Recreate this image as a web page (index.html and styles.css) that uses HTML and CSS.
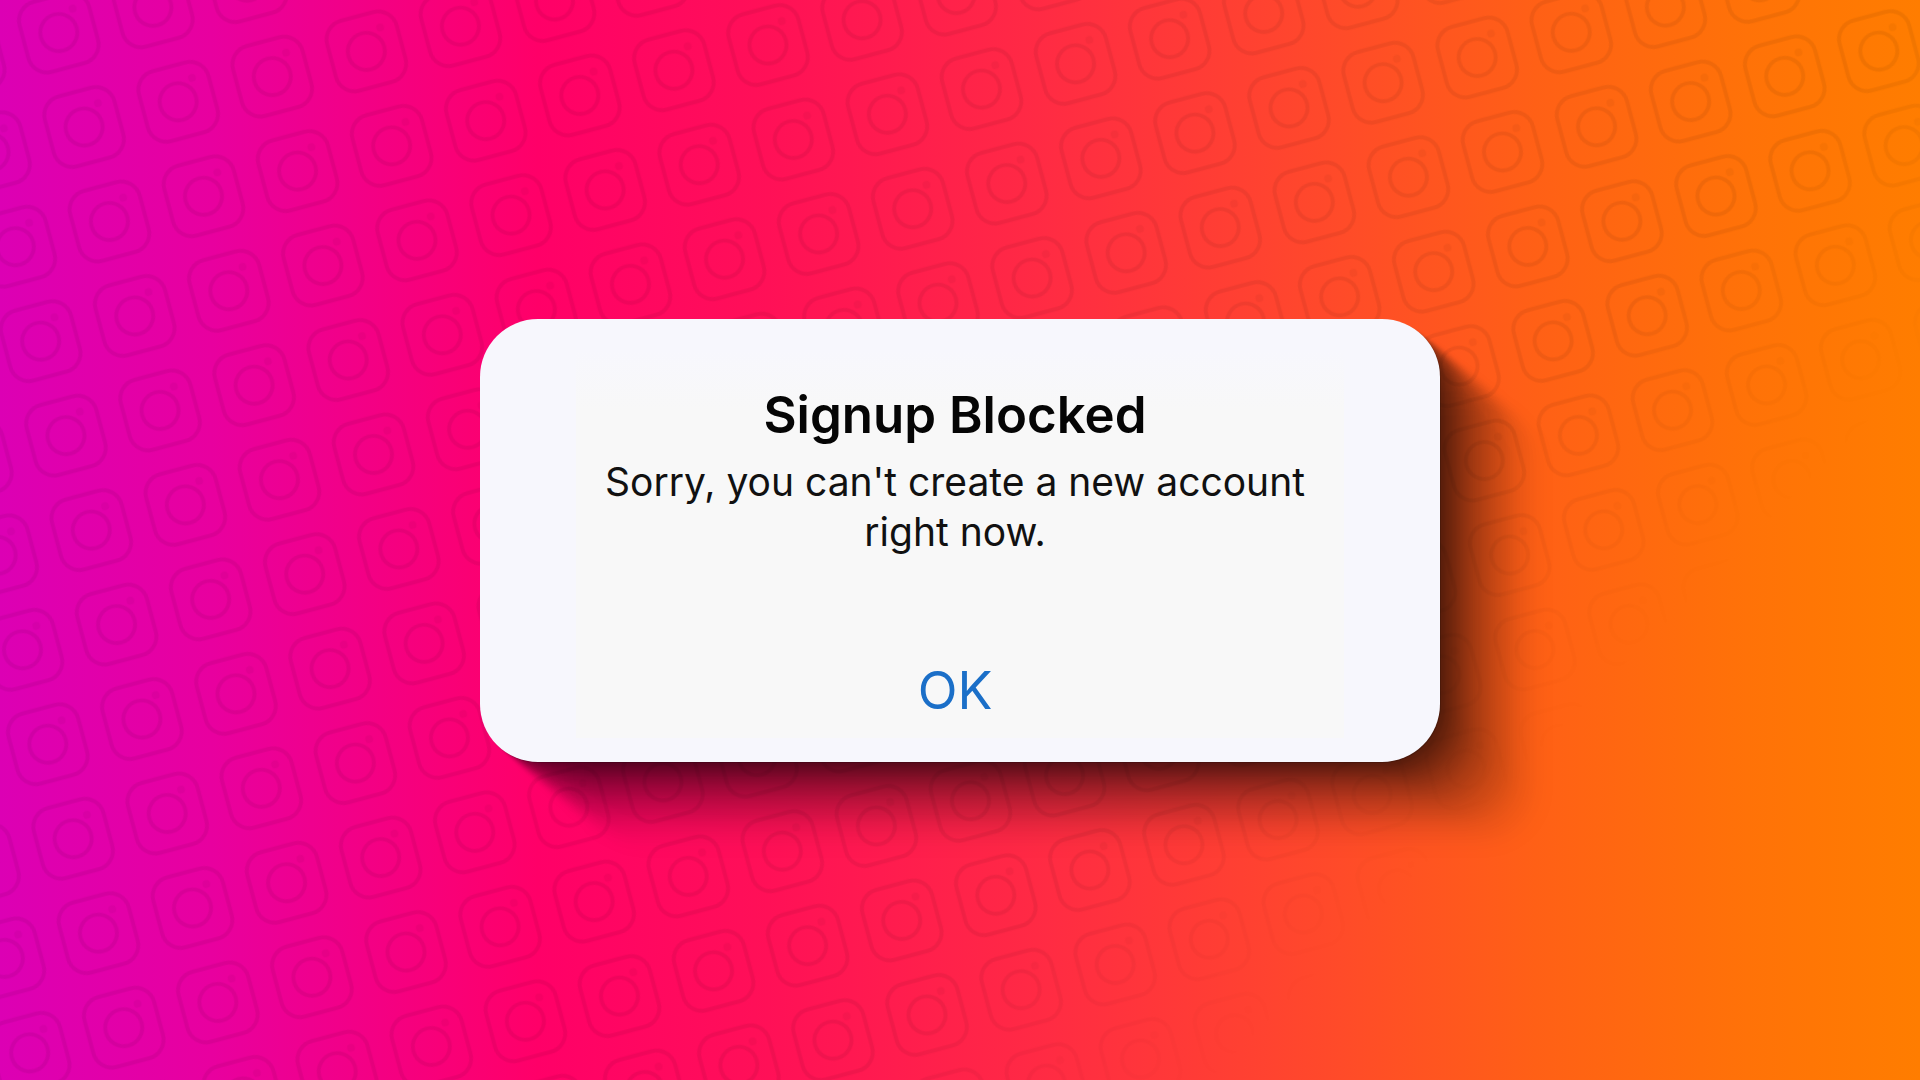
FILE: index.html
```
<!DOCTYPE html>
<html lang="en">
<head>
    <meta charset="UTF-8">
    <title>Signup Blocked</title>
    <link rel="stylesheet" href="styles.css">
</head>
<body>
    <svg class="backdrop" viewBox="0 0 1920 1080" preserveAspectRatio="xMidYMid slice" aria-hidden="true">
        <defs>
            <pattern id="cameras" width="100" height="100" patternUnits="userSpaceOnUse" patternTransform="translate(768 45) rotate(-15) scale(.974 .978) translate(-50 -50)">
                <g fill="none" stroke="#000" stroke-width="4">
                    <rect x="13" y="13" width="74" height="74" rx="20"/>
                    <circle cx="50" cy="50" r="19"/>
                </g>
                <circle cx="70" cy="30" r="4" opacity=".6"/>
            </pattern>
            <linearGradient id="fade" gradientUnits="userSpaceOnUse" x1="970" y1="970" x2="1150" y2="1150">
                <stop offset="0" stop-color="#fff"/>
                <stop offset="1" stop-color="#000"/>
            </linearGradient>
            <mask id="corner">
                <rect width="1920" height="1080" fill="url(#fade)"/>
            </mask>
        </defs>
        <g mask="url(#corner)">
            <rect class="cameras" width="1920" height="1080" fill="url(#cameras)"/>
        </g>
    </svg>
    <main class="alert" role="alertdialog" aria-labelledby="title" aria-describedby="message">
        <div class="panel">
            <h1 id="title">Signup Blocked</h1>
            <p id="message">Sorry, you can't create a new account right now.</p>
            <button type="button">OK</button>
        </div>
    </main>
</body>
</html>
```

FILE: styles.css
```
html,
body {
    height: 100%;
}
body {
    display: flex;
    align-items: center;
    justify-content: center;
    margin: 0;
    overflow: hidden;
    background: linear-gradient(90deg, #dc00b4 0%, #e8009f 11%, #ff0068 28%, #ff1057 40%, #ff2a44 54%, #ff452e 67%, #ff6016 80%, #ff7208 91%, #ff7d00 100%);
    font-family: "Inter", sans-serif;
}
.backdrop {
    position: fixed;
    inset: 0;
    width: 100%;
    height: 100%;
}
.cameras {
    opacity: 0.06;
}
.alert {
    position: relative;
    box-sizing: border-box;
    width: 50%;
    padding: 31px 96px 24px;
    border-radius: 58px;
    background: #f7f7fd;
    /* long shadow, one layer per step */
    box-shadow:
        1px 1px 1px rgba(0, 0, 0, 0.2),
        5px 4px 3px rgba(0, 0, 0, 0.1),
        10px 8px 4px rgba(0, 0, 0, 0.1),
        15px 12px 5px rgba(0, 0, 0, 0.09),
        20px 16px 6px rgba(0, 0, 0, 0.09),
        25px 20px 7px rgba(0, 0, 0, 0.08),
        30px 25px 8px rgba(0, 0, 0, 0.07),
        35px 29px 9px rgba(0, 0, 0, 0.06),
        40px 33px 10px rgba(0, 0, 0, 0.06),
        46px 38px 11px rgba(0, 0, 0, 0.05),
        52px 43px 12px rgba(0, 0, 0, 0.05),
        58px 48px 13px rgba(0, 0, 0, 0.05),
        64px 53px 14px rgba(0, 0, 0, 0.04),
        70px 58px 15px rgba(0, 0, 0, 0.04),
        76px 63px 16px rgba(0, 0, 0, 0.04),
        83px 69px 17px rgba(0, 0, 0, 0.03),
        90px 75px 18px rgba(0, 0, 0, 0.03),
        97px 81px 20px rgba(0, 0, 0, 0.03),
        104px 87px 22px rgba(0, 0, 0, 0.02);
}
.panel {
    padding: 35px 10px 17px 0;
    background: linear-gradient(#f7f7fd, #f8f8f8 60px);
    text-align: center;
}
h1 {
    margin: 0 0 12px;
    color: #050505;
    font-size: 51px;
    font-weight: 600;
    line-height: 60px;
}
p {
    margin: 0;
    color: #111;
    font-size: 39px;
    line-height: 50px;
}
button {
    margin: 104px 0 0;
    padding: 0 24px;
    border: none;
    background: none;
    color: #1b6fc8;
    font-family: inherit;
    font-size: 52px;
    line-height: 60px;
    cursor: pointer;
}
```
